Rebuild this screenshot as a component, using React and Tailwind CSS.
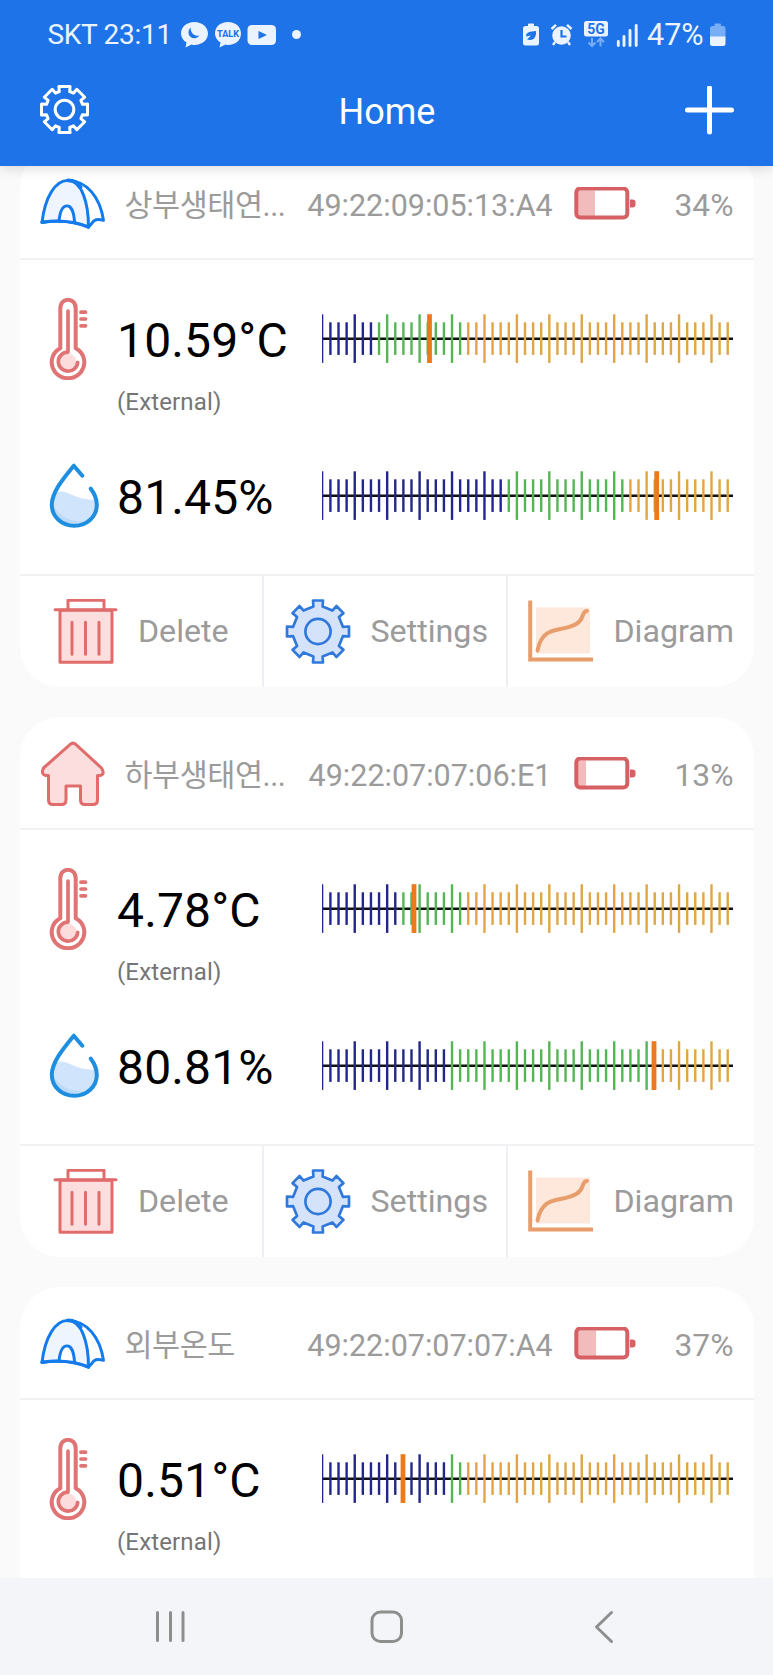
const GRAY = "text-[#9b9b9b]";

function gearPath(cx, cy, teeth, outer, inner, topHalf, baseHalf) {
  const step = (Math.PI * 2) / teeth;
  const pts = [];
  for (let i = 0; i < teeth; i++) {
    const a = i * step - Math.PI / 2;
    [[inner, -baseHalf], [outer, -topHalf], [outer, topHalf], [inner, baseHalf]].forEach(([r, w]) => {
      const x = cx + r * Math.cos(a) - w * Math.sin(a);
      const y = cy + r * Math.sin(a) + w * Math.cos(a);
      pts.push(`${x.toFixed(2)} ${y.toFixed(2)}`);
    });
  }
  return `M${pts.join("L")}Z`;
}

function HeaderGear() {
  return (
    <svg width="50" height="50" viewBox="0 0 50 50" fill="none" stroke="#fff" strokeWidth="3" strokeLinejoin="round">
      <path d={gearPath(25.5, 24.5, 8, 23, 18, 5.6, 5.2)} />
      <circle cx="25.5" cy="24.500" r="9.300" />
    </svg>
  );
}

function SettingsIcon() {
  return (
    <svg width="66" height="66" viewBox="0 0 66 66" fill="#d5e3fa" stroke="#3079dc" strokeWidth="2.700" strokeLinejoin="round">
      <path d={gearPath(33, 32.5, 8, 31, 25, 5, 4.6)} />
      <circle cx="33" cy="32.500" r="12.600" />
    </svg>
  );
}

function TentIcon() {
  return (
    <svg width="66" height="52" viewBox="0 0 66 54" preserveAspectRatio="none" fill="none" stroke="#147bec" strokeWidth="3" strokeLinejoin="round" strokeLinecap="round">
      <path fill="#fff" d="M28 2.500C47 3 60 20 63.500 44C59 42.500 54 42.500 52 47L48.500 51Z" />
      <path fill="#eff5ff" d="M2 46C5 20 15 2.500 28 2.500C42 3 48.500 26 48.500 51Q28 42 2 46Z" />
      <path d="M28 2.500C35 2.500 38 5 40.500 9.500" strokeWidth="4" />
      <path fill="#fff" d="M19 45C20 34 23 29 27 29C31 29 34 35 34.500 46" />
      <path d="M2 46Q28 42 48.500 51" strokeWidth="3.400" />
    </svg>
  );
}

function HouseIcon() {
  return (
    <svg width="66" height="66" viewBox="0 0 66 66" fill="#fddede" stroke="#e06c6c" strokeWidth="3" strokeLinejoin="round">
      <path d="M30.500 3.200Q33 1 35.500 3.200L61.500 27Q65.500 33.500 60 34.500H57.500V59Q57.500 63.500 53 63.500H45Q40.500 63.500 40.500 59V45H26V59Q26 63.500 21.500 63.500H13Q8.500 63.500 8.500 59V34.500H6Q.5 33.500 3.500 27Z" />
    </svg>
  );
}

function BatteryIcon({ level }) {
  return (
    <svg width="62" height="34" viewBox="0 0.500 62 34">
      <rect x="4" y="4" width={level} height="26" fill="#f2bcbd" />
      <rect x="2.300" y="2" width="51" height="29" rx="4" fill="none" stroke="#d66064" strokeWidth="4" />
      <path d="M56 13H58.500Q61.500 13 61.500 15.500V18Q61.500 21 58.500 21H56Z" fill="#d66064" />
    </svg>
  );
}

function ThermometerIcon() {
  return (
    <svg width="40" height="82" viewBox="-.5 0.500 40 84" preserveAspectRatio="none" fill="none" stroke="#e07474" strokeWidth="4" strokeLinecap="round">
      <path d="M10.800 52V11C10.800 -.5 26.200 -.5 26.200 11V52A16.300 16.300 0 1 1 10.800 52Z" strokeLinejoin="round" />
      <circle cx="18.500" cy="66" r="8.500" fill="#fcdcdc" stroke="none" />
      <path d="M18.500 14V55.500M18.500 56A9.700 9.700 0 1 0 28.200 66.500" strokeWidth="3.700" />
      <path d="M31.500 15H36M31.500 22H36M31.500 29H36" strokeWidth="3.800" />
    </svg>
  );
}

function DropIcon() {
  return (
    <svg width="50" height="66" viewBox="-.8 .3 50 66" fill="none" stroke="#1e8ee0" strokeWidth="4" strokeLinecap="round" strokeLinejoin="round">
      <path d="M5 30C17 25 24 38 45 37C48 51 37 61 25 61C11 61 1 50 3 37Z" fill="#d0e4fb" stroke="none" />
      <path d="M3 42C8 52 20 60 32 58C20 66 2 56 3 42Z" fill="#bdd9f8" stroke="none" />
      <path d="M32.500 13L24 3C15 14 2 29 2 42C2 54 12 63 24.500 63C37 63 47 54 47 42C47 35 44 30 41 26" />
    </svg>
  );
}

function TrashIcon() {
  return (
    <svg width="66" height="66" viewBox="0 0.800 66 66" fill="none" stroke="#e06c6c" strokeWidth="3" strokeLinecap="round" strokeLinejoin="round">
      <path d="M7 12H59V64H7Z" fill="#fddede" />
      <path d="M2 11.500H63M15 11V2H51V11M19 24V56M32.500 24V56M46 24V56" />
    </svg>
  );
}

function DiagramIcon() {
  return (
    <svg width="66" height="64" viewBox="0 0.500 66 64" fill="none" stroke="#e89e6c">
      <rect x="8" y="8" width="54" height="46" fill="#fde8db" stroke="none" />
      <path d="M2.200 1V60H65" strokeWidth="4" />
      <path d="M9.500 51C15 24 33 34 49 24C57 19 53 12 59 11.500" strokeWidth="4" strokeLinecap="round" />
    </svg>
  );
}

function Scale({ green, orange, marker }) {
  return (
    <svg width="412" height="50" viewBox="0 0.300 412 50" className="shrink-0">
      <path d="M.5 25H411" stroke="#111" strokeWidth="2.600" />
      {Array.from({ length: 51 }, (_, i) => {
        const tall = i % 4 === 0;
        const x = 0.3 + i * 8.108;
        return (
          <rect
            key={i}
            x={i === 0 ? 0 : x - 1.2}
            y={tall ? 0.6 : 8.6}
            width={i === 0 ? 1.3 : 2.4}
            height={tall ? 48.6 : 32.6}
            fill={i < green ? "#22268c" : i < orange ? "#54b554" : "#e0a546"}
          />
        );
      })}
      <rect x={marker - 2.4} y="0.500" width="4.800" height="48.800" fill="#ea7a1c" />
    </svg>
  );
}

function Reading({ icon, value, scale }) {
  return (
    <div className="flex h-[50px] items-center">
      <div className="flex w-[68px] shrink-0 justify-start">{icon}</div>
      <div className="w-[205px] shrink-0 pt-[4px] text-[48px] leading-[50px] tracking-[0.150px] whitespace-nowrap text-black">{value}</div>
      <Scale {...scale} />
    </div>
  );
}

function Action({ icon, label, className }) {
  return (
    <button className={`flex items-center border-[#eeeff2] text-[32.200px] leading-none ${GRAY} ${className}`}>
      {icon}
      <span>{label}</span>
    </button>
  );
}

function Card({ sensor }) {
  return (
    <section className="flex h-[540px] w-[734px] shrink-0 flex-col overflow-hidden rounded-[40px] bg-white">
      <header className={`flex h-[113px] shrink-0 items-center border-b-2 border-[#f0f1f2] pt-[3px] pl-5 text-[30.500px] leading-none ${GRAY}`}>
        <div className="w-[66px]">{sensor.icon}</div>
        <div className="ml-[18.500px] w-[168.500px] pt-[4px] text-[30.500px] tracking-[-0.450px] whitespace-nowrap">{sensor.name}</div>
        <div className="w-[270px] pt-[4px] pl-[4px] text-center">{sensor.mac}</div>
        <div className="ml-[11px] w-[62px]"><BatteryIcon level={sensor.level} /></div>
        <div className="flex-1 pt-[3px] pr-[20.500px] text-right text-[31.800px]">{sensor.battery}</div>
      </header>
      <div className="flex h-[314px] shrink-0 flex-col pt-[54px] pl-[29px]">
        <Reading icon={<ThermometerIcon />} value={sensor.temp} scale={sensor.tempScale} />
        <div className="mt-[24px] ml-[68px] h-7 text-[24px] leading-7 tracking-[0.150px] text-[#757575]">(External)</div>
        {sensor.humidity && (
          <div className="mt-[55px]">
            <Reading icon={<DropIcon />} value={sensor.humidity} scale={sensor.humidityScale} />
          </div>
        )}
      </div>
      {sensor.humidity && (
        <footer className="flex flex-1 border-t-2 border-[#f0f1f2]">
          <Action icon={<TrashIcon />} label="Delete" className="w-[244px] gap-[19px] border-r-2 pl-[33px]" />
          <Action icon={<SettingsIcon />} label="Settings" className="w-[244px] gap-[19.500px] border-r-2 pl-[21px]" />
          <Action icon={<DiagramIcon />} label="Diagram" className="flex-1 gap-[19.500px] pl-[20px]" />
        </footer>
      )}
    </section>
  );
}

const SENSORS = [
  {
    name: "상부생태연...", mac: "49:22:09:05:13:A4", battery: "34%", level: 17, icon: <TentIcon />,
    temp: "10.59°C", tempScale: { green: 7, orange: 18, marker: 107.5 },
    humidity: "81.45%", humidityScale: { green: 23, orange: 38, marker: 334.7 },
  },
  {
    name: "하부생태연...", mac: "49:22:07:07:06:E1", battery: "13%", level: 8, icon: <HouseIcon />,
    temp: "4.78°C", tempScale: { green: 10, orange: 18, marker: 92 },
    humidity: "80.81%", humidityScale: { green: 16, orange: 41, marker: 332 },
  },
  {
    name: "외부온도", mac: "49:22:07:07:07:A4", battery: "37%", level: 18, icon: <TentIcon />,
    temp: "0.51°C", tempScale: { green: 16, orange: 18, marker: 81 },
  },
];

function StatusBar() {
  return (
    <div className="flex h-[70px] items-center justify-between pr-[47px] pl-[47.500px] text-[28px] leading-none text-[#eaf3ff]">
      <div className="flex items-center">
        <span className="w-[133.500px] tracking-[-0.300px] whitespace-nowrap">SKT 23:11</span>
        <svg width="122" height="26" viewBox="0 0 122 26" fill="#eaf3ff">
          <path d="M13.500 0C5.500 0 0 5 0 11.500C0 15 2 18.500 5.500 20.500L4.500 25.500L10.500 22.500Q12 23 13.500 23C21 23 27 18 27 11.500C27 5 21 0 13.500 0Z" />
          <path d="M9.800 5.500A6 6 0 1 0 18.500 13.500A7 7 0 0 1 9.800 5.500Z" fill="#1f73e8" />
          <path d="M47 0C39 0 34 5 34 11.500C34 15 36 18.500 39.500 20.500L38.500 25.500L44.500 22.500Q46 23 47 23C55 23 60 18 60 11.500C60 5 55 0 47 0Z" />
          <text x="47" y="15" textAnchor="middle" fontSize="9" fontWeight="800" fill="#1f73e8">TALK</text>
          <rect x="66.500" y="3" width="28.500" height="20" rx="4.500" />
          <path d="M77.500 9V17L86 13Z" fill="#1f73e8" />
          <circle cx="115.500" cy="12.500" r="4.500" />
        </svg>
      </div>
      <div className="flex items-center">
        <svg width="116" height="28" viewBox="0 0 116 28" fill="#eaf3ff">
          <path d="M5 5V3.500Q5 2.500 6 2.500H10Q11 2.500 11 3.500V5H13.500Q16 5 16 7.500V22Q16 24.500 13.500 24.500H2.500Q0 24.500 0 22V7.500Q0 5 2.500 5Z" />
          <path d="M13 10C7 10.500 3 11 3 15.500L8 14.500L4 18.500C11 20.500 13.500 16 13 10Z" fill="#1f73e8" />
          <circle cx="38.500" cy="14.500" r="9.300" />
          <path d="M28.500 8L33 3.800M48.500 8L44 3.800M32 21L30 24M45 21L47 24" stroke="#eaf3ff" strokeWidth="2.400" />
          <path d="M38.500 9V15.500H43.500" fill="none" stroke="#1f73e8" strokeWidth="2.200" />
          <rect x="61" y="0" width="24" height="15.500" rx="2.500" />
          <text x="73" y="12.500" textAnchor="middle" fontSize="14" fontWeight="700" fill="#1f73e8">5G</text>
          <path d="M69 17V25M65.500 21.500L69 25L72.500 21.500M77.500 25.500V17.500M74 21L77.500 17.500L81 21" fill="none" stroke="#78aef5" strokeWidth="2" />
          <path d="M95.300 20.500V24.500M101 15.500V24.500M107 9.500V24.500M113.200 4.500V24.500" stroke="#eaf3ff" strokeWidth="2.900" strokeLinecap="round" />
        </svg>
        <span className="ml-[8px] w-[63px] text-[30.500px]">47%</span>
        <svg width="16" height="24" viewBox="0 0 16 24">
          <path d="M4.500 3V1.500Q4.500 .5 5.500 .5H10Q11 .5 11 1.500V3H13Q15.500 3 15.500 5.500V14H0V5.500Q0 3 2.500 3Z" fill="#78aef5" />
          <path d="M0 13.500H15.500V20.500Q15.500 23 13 23H2.500Q0 23 0 20.500Z" fill="#eaf3ff" />
        </svg>
      </div>
    </div>
  );
}

export default function App() {
  return (
    <div className="flex h-[1675px] w-[773px] flex-col overflow-hidden bg-[#fafafa] font-[Roboto,'Noto_Sans_CJK_KR',sans-serif]">
      <div className="relative z-10 flex h-[166px] shrink-0 flex-col bg-[#1f73e8] shadow-[0_2px_12px_rgba(0,0,0,0.15)]">
        <StatusBar />
        <div className="flex h-[80px] items-center justify-between pr-[39px] pl-[39px]">
          <HeaderGear />
          <h1 className="pt-[3px] text-[36px] leading-none text-white">Home</h1>
          <svg width="49" height="49" viewBox="0 0.500 49 49" stroke="#fff" strokeWidth="5" strokeLinecap="round">
            <path d="M24.500 2.500V46.500M2.500 24.500H46.500" />
          </svg>
        </div>
      </div>
      <main className="-mt-[19px] flex min-h-0 flex-1 flex-col gap-[30px] overflow-hidden pl-5">
        {SENSORS.map((s) => <Card key={s.mac} sensor={s} />)}
      </main>
      <nav className="flex h-[97px] shrink-0 items-center bg-[#f4f5f8]">
        <svg width="773" height="34" viewBox="0 0 773 34" fill="none" stroke="#8e8e8e" strokeWidth="3" strokeLinecap="round" strokeLinejoin="round">
          <path d="M157.500 2.500V30.500M170.500 2.500V30.500M183 2.500V30.500" />
          <rect x="372" y="2" width="29.500" height="29.500" rx="8.500" />
          <path d="M611.500 2.500L596.500 17L611.500 31.500" />
        </svg>
      </nav>
    </div>
  );
}
